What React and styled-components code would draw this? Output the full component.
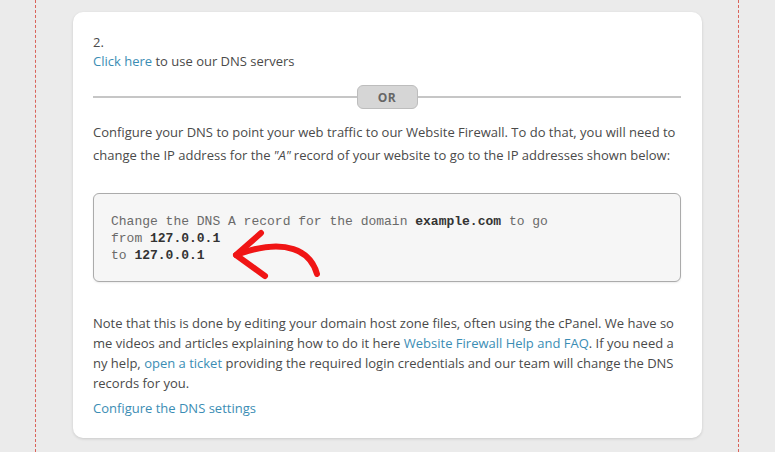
import React from "react";
import styled, { createGlobalStyle } from "styled-components";

const GlobalStyle = createGlobalStyle`
  html, body {
    margin: 0;
    padding: 0;
    background: #ebebeb;
  }
  body {
    font-family: "Open Sans", "Liberation Sans", sans-serif;
    color: #4a4a4a;
  }
`;

const Page = styled.div`
  width: 704px;
  min-height: 452px;
  margin-left: 35px;
  padding: 12px 36px 0 37px;
  box-sizing: border-box;
  border-left: 1px dashed #d9635a;
  border-right: 1px dashed #d9635a;
`;

const Card = styled.div`
  background: #fff;
  border-radius: 10px;
  box-shadow: 0 1px 3px rgba(0, 0, 0, 0.14);
  padding: 21px 21px 20px 20px;
  font-size: 13px;
`;

const Line = styled.div`
  line-height: 19px;
`;

const Link = styled.a`
  color: #3b8db4;
  text-decoration: none;
  cursor: pointer;
`;

const Divider = styled.div`
  display: flex;
  align-items: center;
  margin: 14px 0 12px;

  &::before,
  &::after {
    content: "";
    flex: 1;
    height: 2px;
    background: #c6c6c6;
  }
`;

const OrBadge = styled.span`
  width: 59px;
  height: 22px;
  display: flex;
  align-items: center;
  justify-content: center;
  background: #d6d6d6;
  border: 1px solid #bdbdbd;
  border-radius: 6px;
  color: #666;
  font-weight: 700;
  font-size: 12px;
  letter-spacing: 0.5px;
`;

const Paragraph = styled.p`
  margin: ${({ $top }) => $top || 0}px 0 0;
  line-height: ${({ $lh }) => $lh || 20}px;
`;

const Quote = styled.i`
  margin: 0 3px;
`;

const CodeBox = styled.div`
  position: relative;
  margin-top: 26px;
  background: #f6f6f6;
  border: 1px solid #ababab;
  border-radius: 6px;
  box-shadow: 0 1px 2px rgba(0, 0, 0, 0.08);
  padding: 19px 17px 17px;
  font-family: "Liberation Mono", "Courier New", monospace;
  font-size: 13px;
  line-height: 17px;
  color: #6a6a6a;

  b {
    color: #333;
  }
`;

const Arrow = styled.svg`
  position: absolute;
  left: 133px;
  top: 30px;
  width: 100px;
  height: 56px;
  overflow: visible;
`;

export default function App() {
  return (
    <>
      <GlobalStyle />
      <Page>
        <Card>
          <Line>2.</Line>
          <Line>
            <Link>Click here</Link> to use our DNS servers
          </Line>

          <Divider>
            <OrBadge>OR</OrBadge>
          </Divider>

          <Paragraph $lh={23}>
            Configure your DNS to point your web traffic to our Website
            Firewall. To do that, you will need to change the IP address for
            the<Quote>"A"</Quote>record of your website to go to the IP
            addresses shown below:
          </Paragraph>

          <CodeBox>
            <div>
              Change the DNS A record for the domain <b>example.com</b> to go
            </div>
            <div>
              from <b>127.0.0.1</b>
            </div>
            <div>
              to <b>127.0.0.1</b>
            </div>
            <Arrow viewBox="0 0 100 56">
              <path
                d="M90 50 C 84 28, 60 12, 9 31"
                fill="none"
                stroke="#f01515"
                strokeWidth="6"
                strokeLinecap="round"
              />
              <path
                d="M34 9 L 9 31 L 38 52"
                fill="none"
                stroke="#f01515"
                strokeWidth="6"
                strokeLinecap="round"
                strokeLinejoin="round"
              />
            </Arrow>
          </CodeBox>

          <Paragraph $top={31}>
            Note that this is done by editing your domain host zone files, often
            using the cPanel. We have so
            <br />
            me videos and articles explaining how to do it here{" "}
            <Link>Website Firewall Help and FAQ</Link>. If you need a
            <br />
            ny help, <Link>open a ticket</Link> providing the required login
            credentials and our team will change the DNS
            <br />
            records for you.
          </Paragraph>

          <Paragraph $top={5}>
            <Link>Configure the DNS settings</Link>
          </Paragraph>
        </Card>
      </Page>
    </>
  );
}
